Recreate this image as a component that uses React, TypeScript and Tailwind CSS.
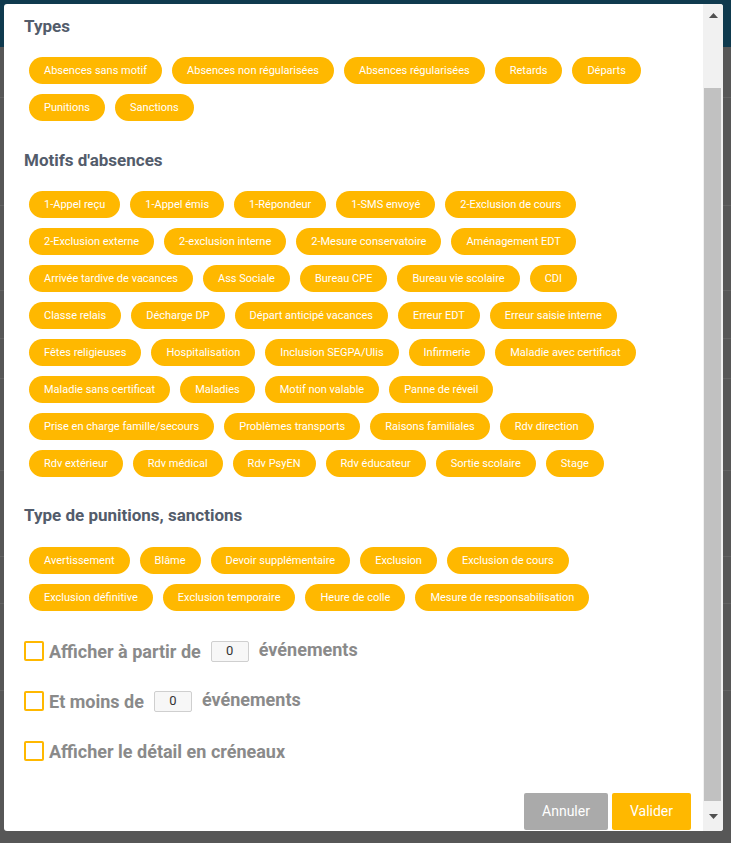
import React from 'react';

const types = ['Absences sans motif', 'Absences non régularisées', 'Absences régularisées', 'Retards', 'Départs', 'Punitions', 'Sanctions'];

const motifs = [
    '1-Appel reçu', '1-Appel émis', '1-Répondeur', '1-SMS envoyé', '2-Exclusion de cours',
    '2-Exclusion externe', '2-exclusion interne', '2-Mesure conservatoire', 'Aménagement EDT',
    'Arrivée tardive de vacances', 'Ass Sociale', 'Bureau CPE', 'Bureau vie scolaire', 'CDI',
    'Classe relais', 'Décharge DP', 'Départ anticipé vacances', 'Erreur EDT', 'Erreur saisie interne',
    'Fêtes religieuses', 'Hospitalisation', 'Inclusion SEGPA/Ulis', 'Infirmerie', 'Maladie avec certificat',
    'Maladie sans certificat', 'Maladies', 'Motif non valable', 'Panne de réveil',
    'Prise en charge famille/secours', 'Problèmes transports', 'Raisons familiales', 'Rdv direction',
    'Rdv extérieur', 'Rdv médical', 'Rdv PsyEN', 'Rdv éducateur', 'Sortie scolaire', 'Stage',
];

const punitions = [
    'Avertissement', 'Blâme', 'Devoir supplémentaire', 'Exclusion', 'Exclusion de cours',
    'Exclusion définitive', 'Exclusion temporaire', 'Heure de colle', 'Mesure de responsabilisation',
];

// lines of the page dimmed behind the modal
const bgLines = [97, 205, 290, 338, 378, 470, 556, 603, 690];

const Chip = ({ label }: { label: string }) => (
    <span className="flex h-[27px] items-center rounded-full bg-[#ffb800] px-[15px] text-[11px] leading-none text-white">
        {label}
    </span>
);

const ChipList = ({ items }: { items: string[] }) => (
    <div className="ml-[5px] flex w-[632px] flex-wrap gap-[10px]">
        {items.map((item) => (
            <Chip key={item} label={item} />
        ))}
    </div>
);

const Heading = ({ children, className = '' }: { children: React.ReactNode; className?: string }) => (
    <h2 className={`text-[17px] font-bold leading-[24px] text-[#535c6b] ${className}`}>{children}</h2>
);

const Checkbox = () => <span className="h-[20px] w-[20px] shrink-0 rounded-[2px] border-2 border-[#ffb800]" />;

const CountInput = () => (
    <span className="mx-[10px] flex h-[21px] w-[38px] items-center justify-center rounded-[2px] border border-[#cfcfcf] bg-[#f7f7f7] text-[13px] font-normal text-[#333]">
        0
    </span>
);

export default function App() {
    return (
        <div className="relative h-[843px] w-[731px] overflow-hidden bg-[#575757] font-['Roboto',sans-serif]">
            <div className="h-[47px] bg-[#0f3a4e]" />
            {bgLines.map((y) => (
                <div key={y} className="absolute left-0 h-px w-full bg-[#636363]" style={{ top: y }} />
            ))}

            <div className="absolute left-[4px] top-[4px] flex h-[827px] w-[719px] overflow-hidden rounded-[3px] bg-white">
                <div className="flex-1 pl-[20px] pr-[12px] pt-[10px]">
                    <Heading>Types</Heading>
                    <div className="mt-[19px]">
                        <ChipList items={types} />
                    </div>

                    <Heading className="mt-[27px]">Motifs d'absences</Heading>
                    <div className="mt-[19px]">
                        <ChipList items={motifs} />
                    </div>

                    <Heading className="mt-[26px]">Type de punitions, sanctions</Heading>
                    <div className="mt-[20px]">
                        <ChipList items={punitions} />
                    </div>

                    <div className="mt-[25px] flex flex-col gap-[20px] text-[18px] font-bold text-[#8a8a8a]">
                        <label className="flex h-[30px] items-center">
                            <Checkbox />
                            <span className="ml-[5px]">Afficher à partir de</span>
                            <CountInput />
                            <span className="pb-[4px]">événements</span>
                        </label>
                        <label className="flex h-[30px] items-center">
                            <Checkbox />
                            <span className="ml-[5px]">Et moins de</span>
                            <CountInput />
                            <span className="pb-[4px]">événements</span>
                        </label>
                        <label className="flex h-[30px] items-center">
                            <Checkbox />
                            <span className="ml-[5px]">Afficher le détail en créneaux</span>
                        </label>
                    </div>

                    <div className="mt-[27px] flex justify-end gap-[4px]">
                        <button className="h-[37px] w-[84px] rounded-[2px] bg-[#aaaaaa] text-[14px] text-white">Annuler</button>
                        <button className="h-[37px] w-[79px] rounded-[2px] bg-[#ffb800] text-[14px] text-white">Valider</button>
                    </div>
                </div>

                {/* scrollbar */}
                <div className="flex w-[20px] flex-col bg-[#f1f1f1]">
                    <div className="flex h-[22px] items-center justify-center">
                        <svg width="9" height="5" viewBox="0 0 9 5">
                            <polygon points="0,5 4.5,0 9,5" fill="#505050" />
                        </svg>
                    </div>
                    <div className="ml-[1px] mt-[62px] h-[713px] w-[17px] bg-[#c1c1c1]" />
                    <div className="flex flex-1 items-center justify-center">
                        <svg width="9" height="5" viewBox="0 0 9 5">
                            <polygon points="0,0 9,0 4.5,5" fill="#505050" />
                        </svg>
                    </div>
                </div>
            </div>
        </div>
    );
}
